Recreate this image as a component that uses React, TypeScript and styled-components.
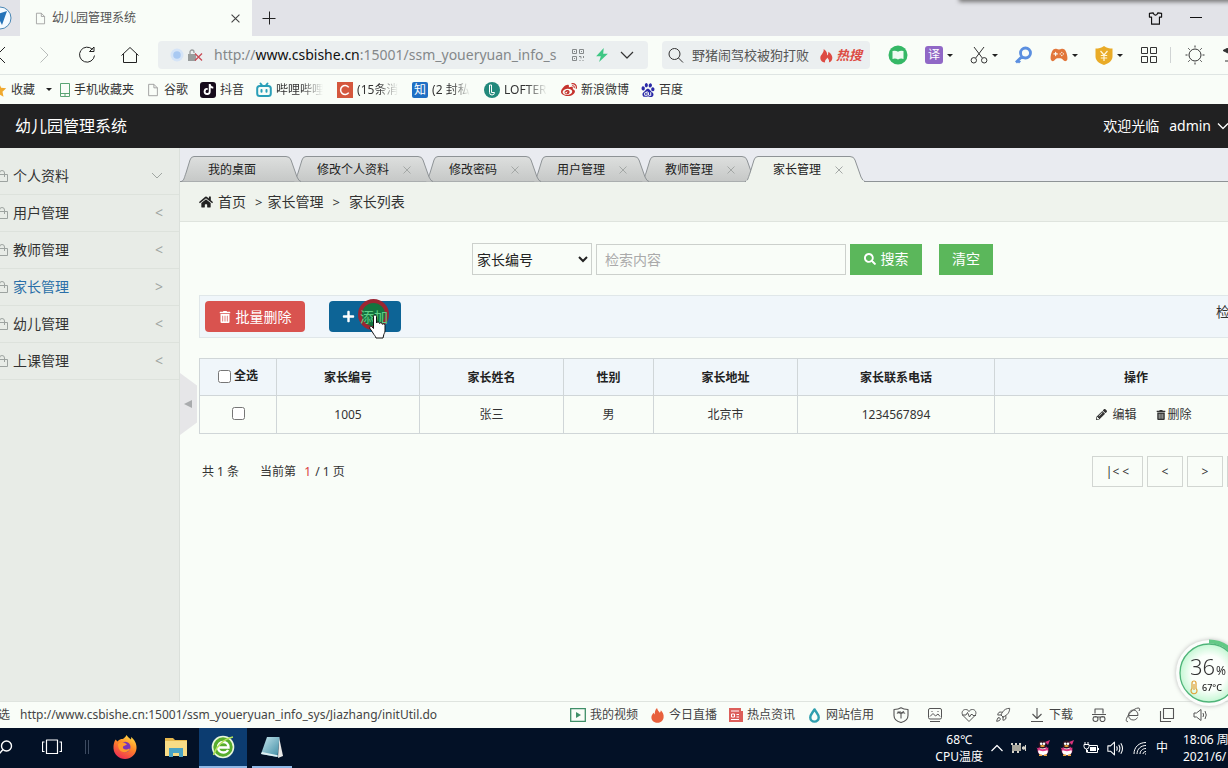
import React from 'react';
import styled, { createGlobalStyle, css } from 'styled-components';
import { FaHome, FaTrashAlt, FaSearch, FaPlus, FaPencilAlt, FaWeibo, FaTiktok } from 'react-icons/fa';
import { SiBaidu } from 'react-icons/si';
import { IoGameController } from 'react-icons/io5';
import { Rocket } from 'lucide-react';

const PAGE = '#f9fdf8';
const SANS = '"Noto Sans", "Noto Sans CJK SC", sans-serif';

const GlobalStyle = createGlobalStyle`
  * { box-sizing: border-box; }
  body { margin: 0; font-family: ${SANS}; font-size: 12px; line-height: 20px; color: #333; background: ${PAGE}; }
  button, input, select { font: inherit; color: inherit; }
  button { border: 0; padding: 0; background: none; cursor: pointer; }
  a { color: inherit; text-decoration: none; }
  ul { list-style: none; margin: 0; padding: 0; }
  svg { display: block; flex: none; }
`;

const Screen = styled.div`
  position: relative;
  display: flex;
  flex-direction: column;
  min-height: 100vh;
  overflow: hidden;
`;

/* ---------- browser chrome ---------- */

const TabStrip = styled.div`
  position: relative;
  display: flex;
  align-items: center;
  height: 36px;
  padding-right: 26px;
  background: #e2e3e8;
`;

const WindowShadow = styled.div`
  position: absolute;
  top: -5px;
  right: -4px;
  width: 272px;
  height: 5px;
  box-shadow: 0 1px 4px 1px #777;
`;

const Avatar = styled.svg`
  margin-left: -12px;
`;

const BrowserTab = styled.div`
  display: flex;
  align-items: center;
  gap: 5px;
  width: 232px;
  height: 36px;
  margin-left: 8px;
  padding: 0 12px 0 14px;
  background: ${PAGE};
  color: #555;
`;

const Grow = styled.span`
  flex: 1;
`;

const NewTab = styled.button`
  margin-left: 10px;
`;

const WindowButtons = styled.div`
  display: flex;
  gap: 27px;
  align-items: center;
`;

const Toolbar = styled.div`
  display: flex;
  align-items: center;
  height: 39px;
  border-bottom: 1px solid #dfe5e3;
`;

const NavButtons = styled.div`
  display: flex;
  align-items: center;
  gap: 25px;
  margin: 0 19px 0 -12px;
`;

const Forward = styled.button`
  margin-right: 4px;
`;

const Pill = styled.div`
  display: flex;
  align-items: center;
  height: 28px;
  border-radius: 4px;
  background: #ebeff0;
`;

const AddressBar = styled(Pill)`
  flex: 1;
  min-width: 0;
  padding: 0 14px 0 12px;
  gap: 11px;
`;

const Url = styled.div`
  flex: 1;
  min-width: 0;
  overflow: hidden;
  white-space: nowrap;
  font-size: 14px;
  color: #84888a;
  b { font-weight: 400; color: #111; }
`;

const SiteMarks = styled.div`
  display: flex;
  align-items: center;
  gap: 4px;
`;

const SearchPill = styled(Pill)`
  flex: none;
  width: 208px;
  margin: 0 18px 0 14px;
  padding: 0 8px 0 6px;
  gap: 8px;
`;

const HotInput = styled.input`
  flex: 1;
  min-width: 0;
  border: 0;
  padding: 0;
  background: none;
  font-size: 13px;
  outline: none;
  &::placeholder { color: #555; opacity: 1; }
`;

const Hot = styled.a`
  display: flex;
  align-items: center;
  gap: 2px;
  color: #dd4b43;
  font-size: 13px;
  font-weight: 700;
  font-style: italic;
`;

const Tools = styled.div`
  display: flex;
  flex: none;
  align-items: center;
  gap: 17px;
`;

const Tool = styled.button`
  display: flex;
  align-items: center;
  gap: 4px;
`;

const Caret = styled.span`
  border: 3px solid transparent;
  border-top-color: #222;
  border-bottom: 0;
`;

const ToolDivider = styled.span`
  width: 1px;
  height: 16px;
  margin: 0 -3px 0 -5px;
  background: #d0d4d4;
`;

const Badge = styled.span<{ $bg: string; $size: number; $round: number }>`
  display: flex;
  flex: none;
  align-items: center;
  justify-content: center;
  width: ${p => p.$size}px;
  height: ${p => p.$size}px;
  border-radius: ${p => p.$round}px;
  background: ${p => p.$bg};
  color: #fff;
`;

const Bookmarks = styled.nav`
  display: flex;
  align-items: center;
  gap: 12px;
  height: 29px;
  white-space: nowrap;
`;

const Bookmark = styled.a<{ $text?: number }>`
  display: flex;
  flex: none;
  align-items: center;
  gap: 4px;
  span.label {
    overflow: hidden;
    ${p => p.$text && css`
      width: ${p.$text}px;
      mask-image: linear-gradient(90deg, #000 50%, transparent 96%);
    `}
  }
`;

const Favorites = styled(Bookmark)`
  margin: 0 -4px 0 -9px;
  ${Caret} { margin-left: 7px; }
`;

/* ---------- application ---------- */

const AppHeader = styled.header`
  display: flex;
  align-items: center;
  justify-content: space-between;
  height: 44px;
  padding-left: 15px;
  background: #212122;
  color: #fff;
  font-size: 14px;
`;

const AppTitle = styled.h1`
  margin: 0;
  font-size: 16px;
  font-weight: 400;
`;

const Welcome = styled.div`
  display: flex;
  align-items: center;
  gap: 10px;
  margin-right: -2px;
`;

const UserMenu = styled.button`
  display: flex;
  align-items: center;
  gap: 5px;
`;

const AppBody = styled.div`
  position: relative;
  display: flex;
  flex: 1;
`;

const Sidebar = styled.aside`
  position: relative;
  flex: none;
  width: 180px;
  padding-top: 10px;
  background: #e8ece7;
  border-right: 1px solid #dbe0db;
`;

const MenuItem = styled.a<{ $active?: boolean }>`
  display: flex;
  align-items: center;
  gap: 5px;
  height: 37px;
  padding-right: 16px;
  margin-left: -4px;
  border-bottom: 1px solid #dde2dc;
  font-size: 14px;
  color: ${p => (p.$active ? '#2a6fa8' : '#333')};
`;

const Arrow = styled.span`
  color: #a0a6a2;
  font-size: 14px;
`;

const Collapse = styled.button`
  position: absolute;
  top: 225px;
  right: -18px;
  width: 17px;
  height: 62px;
  display: flex;
  align-items: center;
  padding-left: 4px;
  background: #e6e6e8;
  clip-path: polygon(0 0, 100% 20%, 100% 80%, 0 100%);
`;

const Content = styled.main`
  flex: 1;
  min-width: 0;
  margin-right: -50px;
`;

const PageTabs = styled.ul`
  display: flex;
  align-items: flex-end;
  height: 34px;
  padding-left: 1px;
  background: #e9ebf0;
  border-bottom: 1px solid #8e9396;
`;

const PageTab = styled.li<{ $order: number; $fixed?: boolean }>`
  position: relative;
  z-index: ${p => p.$order};
  display: flex;
  align-items: center;
  gap: 14px;
  height: 25px;
  padding: ${p => (p.$fixed ? '2px 37px 0 27px' : '2px 14px 0 24px')};
  color: #222;
  a, button { position: relative; display: block; }
`;

const TabShape = styled.svg`
  position: absolute;
  top: 0;
  left: 0;
  overflow: visible;
`;

const Breadcrumb = styled.nav`
  display: flex;
  align-items: center;
  height: 40px;
  padding-left: 19px;
  border-bottom: 1px solid #dfe4de;
  background: #eff3ed;
  font-size: 14px;
  svg { margin-right: 5px; }
`;

const Crumb = styled.span<{ $gap: number }>`
  display: flex;
  &::before { content: '>'; margin: 0 ${p => p.$gap}px 0 9px; font-size: 13px; }
`;

const Inner = styled.div`
  padding-left: 19px;
`;

const SearchRow = styled.form`
  display: flex;
  align-items: center;
  justify-content: center;
  gap: 4px;
  padding: 21px 12px 20px 0;
  font-size: 14px;
`;

const Field = styled.select`
  width: 120px;
  height: 32px;
  border: 1px solid #ccd0cc;
  background: ${PAGE};
  border-radius: 0;
  color: #222;
`;

const Query = styled.input`
  width: 250px;
  height: 31px;
  padding: 0 8px;
  border: 1px solid #ccd0cc;
  background: ${PAGE};
  &::placeholder { color: #aaa; opacity: 1; }
`;

const Button = styled.button<{ $bg: string; $width: number; $round?: boolean }>`
  position: relative;
  display: flex;
  align-items: center;
  justify-content: center;
  gap: 5px;
  width: ${p => p.$width}px;
  height: 31px;
  border-radius: ${p => (p.$round ? 4 : 0)}px;
  background: ${p => p.$bg};
  color: #fff;
  font-size: 14px;
`;

const ClearButton = styled(Button)`
  margin-left: 13px;
`;

const ActionBar = styled.div`
  display: flex;
  align-items: center;
  gap: 24px;
  height: 43px;
  padding: 0 33px 0 5px;
  border: 1px solid #e0e7e9;
  background: #f0f6fa;
  font-size: 14px;
`;

const Total = styled.span`
  padding-bottom: 9px;
`;

const AddLabel = styled.span`
  position: relative;
  color: #5fcf87;
`;

const ClickMark = styled.span`
  position: absolute;
  top: -2px;
  left: 29px;
  width: 31px;
  height: 31px;
  border: 4px solid #9c2632;
  border-radius: 50%;
  background: #14743f;
`;

const Pointer = styled.svg`
  position: absolute;
  top: 13px;
  left: 39px;
`;

const Grid = styled.table`
  width: 100%;
  margin-top: 20px;
  border-collapse: collapse;
  table-layout: fixed;
  text-align: center;
  th, td { height: 38px; padding: 0; border: 1px solid #d0d6d8; }
  th { height: 37px; padding-top: 1px; background: #f0f6fa; font-weight: 600; color: #222; }
  input { margin: 0; vertical-align: -1px; }
`;

const CheckLabel = styled.label`
  display: inline-flex;
  align-items: center;
  gap: 3px;
`;

const RowActions = styled.div`
  display: flex;
  justify-content: center;
  gap: 19px;
  padding-left: 16px;
  a { display: flex; align-items: center; gap: 2px; }
`;

const PagerRow = styled.div`
  display: flex;
  justify-content: space-between;
  align-items: center;
  margin-top: 22px;
`;

const Summary = styled.div`
  display: flex;
  gap: 21px;
  padding-left: 3px;
  word-spacing: normal;
  em { font-style: normal; color: #d9413d; margin: 0 1px 0 5px; }
`;

const Pager = styled.div`
  display: flex;
  gap: 4px;
`;

const PageButton = styled.button<{ $wide?: boolean }>`
  width: ${p => (p.$wide ? 51 : 36)}px;
  height: 31px;
  border: 1px solid #d2d6d2;
`;

const Gauge = styled.div`
  position: absolute;
  z-index: 1;
  right: -15px;
  bottom: -6px;
  svg { filter: drop-shadow(0 0 2px #bbb); }
`;

/* ---------- status bar and taskbar ---------- */

const StatusBar = styled.footer`
  display: flex;
  align-items: center;
  justify-content: space-between;
  height: 27px;
  border-top: 1px solid #dfe4df;
  background: ${PAGE};
  white-space: nowrap;
  color: #444;
`;

const LinkPreview = styled.div`
  display: flex;
  gap: 10px;
  margin-left: -2px;
`;

const StatusTools = styled.div`
  display: flex;
  align-items: center;
  gap: 18px;
  padding-right: 19px;
`;

const StatusLinks = styled.div`
  display: flex;
  gap: 12px;
  margin-right: 1px;
`;

const StatusLink = styled.button`
  display: flex;
  align-items: center;
  gap: 4px;
`;

const Taskbar = styled.div`
  display: flex;
  justify-content: space-between;
  height: 40px;
  background: #031126;
  color: #fff;
`;

const TaskApps = styled.div`
  display: flex;
  align-items: stretch;
`;

const TaskButton = styled.button<{ $width: number; $active?: boolean; $open?: boolean }>`
  display: flex;
  align-items: center;
  justify-content: center;
  width: ${p => p.$width}px;
  background: ${p => (p.$active ? '#0c3c70' : 'transparent')};
  border-bottom: 2px solid ${p => (p.$open ? '#8fb8e6' : 'transparent')};
`;

const NoteButton = styled(TaskButton)`
  margin-left: 5px;
`;

const Tray = styled.div`
  display: flex;
  align-items: center;
  gap: 8px;
`;

const TrayText = styled.div<{ $clock?: boolean }>`
  display: flex;
  flex-direction: column;
  line-height: 17px;
  align-items: ${p => (p.$clock ? 'flex-start' : 'center')};
  white-space: nowrap;
  ${p => p.$clock && 'width: 45px; margin-left: 7px;'}
`;

/* ---------- icons ---------- */

type IconProps = { d: string; size?: number; w?: number; color?: string; fill?: string; box?: number };

const Icon = ({ d, size = 16, w = 1, color = '#333', fill = 'none', box = 16 }: IconProps) => (
  <svg width={size} height={size} viewBox={`0 0 ${box} ${box}`} fill={fill} stroke={color} strokeWidth={w} strokeLinejoin="round">
    <path d={d} />
  </svg>
);

const DOC = 'M3 1.5h6l4 4v9H3zM9 1.5v4h4';
const FLAME = 'M7.500 0c.5 2.500 2 3.500 3 5 .8-.8 1-1.500 1-2.500C13.500 4.500 15 7 14.500 10c-.5 3.500-3.500 5.800-6.500 5.800S1.500 13.500 1.500 10C1.500 8 2.500 6.500 4 5c.2 1 .5 1.500 1 2C5 4.500 5.500 1.500 7.500 0z';

const Bag = () => <Icon size={12} box={12} color="#9da3a0" d="M.5 4.500h11v7H.5zM3.500 7V3Q3.500.5 6 .5T8.500 3V7" />;

const Penguin = () => (
  <svg width="16" height="16" viewBox="0 0 16 16">
    <ellipse cx="8" cy="10.500" rx="5.500" ry="4.800" fill="#c02a6c" />
    <ellipse cx="8" cy="11.500" rx="4.800" ry="3.800" fill="#fff" />
    <ellipse cx="7.500" cy="4.500" rx="4" ry="4" fill="#2a1422" />
    <circle cx="6.200" cy="3.800" r="1.300" fill="#fff" /><circle cx="9" cy="3.800" r="1.300" fill="#fff" />
    <ellipse cx="7.500" cy="6" rx="2.300" ry=".9" fill="#f0a43a" />
    <path d="M1.500 7.500c4 2.200 8 2.200 12 0l-.5 2.500c-3 1.500-7 1.500-10 0z" fill="#e03a86" />
    <path d="M10 2l5-2-2 5z" fill="#d8347c" />
    <path d="M4 15.200h3M9 15.200h3" stroke="#f0a43a" strokeWidth="1.400" />
  </svg>
);

const Firefox = () => (
  <svg width="24" height="24" viewBox="0 0 24 24">
    <defs>
      <linearGradient id="ff" x1=".8" y1="0" x2=".3" y2="1">
        <stop offset="0" stopColor="#ffe14a" /><stop offset=".45" stopColor="#ff8a26" /><stop offset="1" stopColor="#ee2b55" />
      </linearGradient>
    </defs>
    <path fill="url(#ff)" d="M2.500 4.500l2 2C6 4.500 8 4 9.500 4c1.500-.5 3-2 4-4 1 2 3 3 4.500 4.500.3-.8.200-1.500 0-2.500 3.500 2.500 6 7 5.500 11.500C23 19.500 18 24 12 24S1 19.500.500 13.500C.300 10 1 7 2.500 4.500z" />
    <circle cx="12.300" cy="12" r="5.200" fill="#7a35b8" />
    <path fill="#ff9a2c" d="M5 9c2-2 5-2 7-1l2 1.500-3 1.500c-2 .5-1 3.500 1.500 3.500 2 0 3-1 4.500-.7-1 3-5 4.200-8 3S5 12.500 5 9z" />
  </svg>
);

const Folder = () => (
  <svg width="24" height="22" viewBox="0 0 24 22">
    <path fill="#e6b84e" d="M1 2h8l2 2h12v4H1z" />
    <path fill="#f8dc86" d="M1 5h22v15H1z" />
    <path fill="#4aa3c4" d="M5 12h14v9h-4v-4H9v4H5z" />
  </svg>
);

const BrowserLogo = () => (
  <svg width="24" height="24" viewBox="0 0 24 24">
    <circle cx="12" cy="12" r="10.500" fill="#58ad2d" stroke="#e8f6dc" strokeWidth="1.600" />
    <path d="M7 12.500h10.500C17.500 9 15 7 12.200 7 9 7 7 9.500 7 12.300 7 15.500 9.500 17.500 12.300 17.500c2 0 3.800-.8 4.800-2.500" fill="none" stroke="#fff" strokeWidth="2.400" />
    <path d="M2.500 20C5 12 12 4 22 2" fill="none" stroke="#b4e35c" strokeWidth="1.500" />
  </svg>
);

const Notebook = () => (
  <svg width="24" height="22" viewBox="0 0 24 22">
    <defs>
      <linearGradient id="nb" x1="0" y1="0" x2="1" y2="1">
        <stop offset="0" stopColor="#c6e6ee" /><stop offset="1" stopColor="#3b8aa2" />
      </linearGradient>
    </defs>
    <path d="M19 1l4 19-5 2z" fill="#e8e8e6" />
    <path d="M7 1h12.500l-2 20L1 18z" fill="url(#nb)" />
    <path d="M1 18l16.500 3 .2-1.800L2 16z" fill="#dff0f4" />
  </svg>
);

const Television = () => (
  <svg width="16" height="16" viewBox="0 0 16 16" fill="none" stroke="#2a9fb8" strokeWidth="2" strokeLinecap="round">
    <rect x="1.200" y="4" width="13.600" height="10" rx="2.500" />
    <path d="M4.500 1.500L6.500 4M11.500 1.500L9.500 4M5.500 8v1.800M10.500 8v1.800" />
  </svg>
);

const Shield = () => (
  <svg width="18" height="19" viewBox="0 0 18 19">
    <path d="M9 0c2.500 2 5.500 2.500 8.500 2.500v8C17.500 14.500 14 17.500 9 19 4 17.500.5 14.500.5 10.500v-8C3.500 2.500 6.500 2 9 0z" fill="#e9ab27" />
    <path d="M5.500 5L9 9l3.500-4M9 9v6M5.800 9.500h6.400M5.800 12h6.400" fill="none" stroke="#fff6da" strokeWidth="1.200" />
  </svg>
);

/* Trapezoid outline of a page tab; the right foot overlaps the next tab. */
const TabOutline = ({ width, active }: { width: number; active?: boolean }) => {
  const left = active ? -4 : 0;
  const right = width + 8;
  const d = `M${left} 25.500C${left + 3} 25 ${left + 3} 22 ${left + 5} 17L${left + 9} 4Q${left + 10} .5 ${left + 13} .5H${right - 15}Q${right - 11} .5 ${right - 10} 4L${right - 4} 21Q${right - 2} 25.500 ${right} 25.500`;
  return (
    <TabShape width={width} height="25" aria-hidden="true">
      <defs>
        <linearGradient id="tabGrey" x1="0" y1="0" x2="0" y2="1">
          <stop offset="0" stopColor="#dddfde" /><stop offset="1" stopColor="#c6c8c7" />
        </linearGradient>
      </defs>
      <path d={d} fill={active ? '#eff3ed' : 'url(#tabGrey)'} stroke="#8e9396" />
      {active && <path d={`M${left + 1} 25.500H${right - 1}`} stroke="#eff3ed" strokeWidth="2" />}
    </TabShape>
  );
};

/* ---------- data ---------- */

const menu = ['个人资料', '用户管理', '教师管理', '家长管理', '幼儿管理', '上课管理'];

const pageTabs = [
  { name: '我的桌面', width: 112, fixed: true },
  { name: '修改个人资料', width: 132 },
  { name: '修改密码', width: 108 },
  { name: '用户管理', width: 108 },
  { name: '教师管理', width: 108 },
  { name: '家长管理', width: 108, active: true },
];

const columns = [
  { name: '家长编号', width: 143 },
  { name: '家长姓名', width: 144 },
  { name: '性别', width: 90 },
  { name: '家长地址', width: 144 },
  { name: '家长联系电话', width: 197 },
];

const rows = [['1005', '张三', '男', '北京市', '1234567894']];

const X = ({ size = 8, color = '#a4a8a6' }) => <Icon size={size} box={8} color={color} d="M.5.5l7 7M7.500.5l-7 7" />;

/* ---------- sections ---------- */

const BrowserChrome = () => (
  <>
    <TabStrip>
      <WindowShadow />
      <Avatar width="24" height="24" viewBox="0 0 24 24">
        <circle cx="12" cy="12" r="11" fill="#f4faff" stroke="#4a87b4" />
        <path d="M4 10l15-5-5 14-3-6z" fill="#2573b8" />
      </Avatar>
      <BrowserTab>
        <Icon size={13} color="#999" d={DOC} />
        <span>幼儿园管理系统</span>
        <Grow />
        <button aria-label="关闭标签"><X color="#444" size={9} /></button>
      </BrowserTab>
      <NewTab aria-label="新标签"><Icon size={14} box={14} color="#222" d="M7.500.5v13M.5 7.500h13" /></NewTab>
      <Grow />
      <WindowButtons>
        <button aria-label="皮肤"><Icon size={15} w={1.2} color="#111" d="M5.500 2L1.500 2.500V6.500h2.300v7.500h8.400V6.500h2.300v-4L10.500 2 9.500 3.800 8 4.500 6.500 3.800z" /></button>
        <button aria-label="最小化"><Icon size={12} box={12} color="#111" d="M0 5.500h12" /></button>
      </WindowButtons>
    </TabStrip>
    <Toolbar>
      <NavButtons>
        <button aria-label="后退"><Icon size={18} box={18} color="#222" d="M17 1L9 9l8 8" /></button>
        <Forward aria-label="前进"><Icon size={18} box={18} color="#b9bdbb" d="M9.500 1.500L17 9l-7.500 7.500" /></Forward>
        <button aria-label="刷新"><Icon size={18} box={18} color="#222" d="M14.500 3.500A7.500 7.500 0 1 0 16.500 9.500M16 1v4.500h-4.500z" /></button>
        <button aria-label="主页"><Icon size={18} box={18} color="#222" d="M.5 9.500L9 1.500l8.500 8M2.500 8v8.500h13V8" /></button>
      </NavButtons>
      <AddressBar>
        <SiteMarks>
          <svg width="14" height="14" viewBox="0 0 14 14">
            <circle cx="7" cy="7" r="6.500" fill="#d5e4f7" /><circle cx="7" cy="7" r="3.800" fill="#a9c9f2" />
          </svg>
          <svg width="15" height="13" viewBox="0 0 15 13" fill="none">
            <path d="M0 5h8v7H0z" fill="#989c9c" />
            <path d="M2 5V3a2 2 0 0 1 4 0v1" stroke="#989c9c" strokeWidth="1.300" />
            <path d="M7 4.500l7 7M14 4.500l-7 7" stroke="#c94b56" strokeWidth="1.300" />
          </svg>
        </SiteMarks>
        <Url>http://<b>www.csbishe.cn</b>:15001/ssm_youeryuan_info_s</Url>
        <Icon size={12} box={12} color="#85898a" d="M.5.500h4v4h-4zM7.500.500h4v4h-4zM.5 7.500h4v4h-4zM7 7.500h2v2M11.500 7v2M7.500 11.500h1M10.500 11.500h1M2 2.500h1M9 2.500h1M2 9.500h1" />
        <Icon size={14} box={12} color="none" fill="#3fc784" d="M7.500 0L1 7h4l-1.500 5L11 5H7z" />
        <Icon size={14} box={14} color="#333" w={1.200} d="M1 4l6 6 6-6" />
      </AddressBar>
      <SearchPill>
        <Icon size={16} d="M12 7A5.500 5.500 0 1 1 1 7a5.500 5.500 0 0 1 11 0zM10.500 11l4.500 4.500" />
        <HotInput aria-label="搜索" placeholder="野猪闹驾校被狗打败" />
        <Hot href="#"><Icon size={15} color="none" fill="#dd4b43" d="M5 1c3 2 4 4 3.500 7 1-.5 1.500-2 1.500-4 3 2 5 5 4 8-.5 2-2 3-3.500 3.500 1-3-1-4-1.500-5.500C8 12 6 12.500 6.500 15.500 3 15 1 12.500 1.500 9.500 2 7 5.500 5 5 1z" />热搜</Hot>
      </SearchPill>
      <Tools>
        <Tool aria-label="阅读">
          <svg width="20" height="20" viewBox="0 0 20 20">
            <circle cx="10" cy="10" r="9.500" fill="#35b866" />
            <path d="M4.500 6q3-1 5.500.8Q12.500 5 15.500 6v8q-3-1-5.500.6Q7.500 13 4.500 14z" fill="#eefcf2" />
          </svg>
        </Tool>
        <Tool><Badge $bg="#9068c6" $size={18} $round={3}>译</Badge><Caret /></Tool>
        <Tool aria-label="截图"><Icon size={18} box={18} d="M4 1l8.300 11M14 1L5.700 12M6.500 14.300a2.700 2.700 0 1 1-5.400 0 2.700 2.700 0 0 1 5.400 0zM16.900 14.300a2.700 2.700 0 1 1-5.400 0 2.700 2.700 0 0 1 5.400 0z" /><Caret /></Tool>
        <Tool aria-label="查找"><Icon size={18} box={18} w={2.800} color="#5b8fe0" d="M15.500 7a5 5 0 1 1-10 0 5 5 0 0 1 10 0zM7 10.500L1 16.500M3 14.500l2 2" /></Tool>
        <Tool aria-label="游戏"><IoGameController size={18} color="#e2763a" /><Caret /></Tool>
        <Tool aria-label="钱包"><Shield /><Caret /></Tool>
        <Tool aria-label="扩展"><Icon size={18} box={18} d="M1.500 1.500h6v6h-6zM10.500 1.500h6v6h-6zM1.500 10.500h6v6h-6zM10.500 10.500h6v6h-6z" /></Tool>
        <ToolDivider />
        <Tool aria-label="夜间模式"><Icon size={20} box={20} d="M16 10a6 6 0 1 1-12 0 6 6 0 0 1 12 0zM10 .5v2M10 17.500v2M.5 10h2M17.500 10h2M3.300 3.300l1.400 1.400M15.300 15.300l1.400 1.400M3.300 16.700l1.400-1.400M15.300 4.700l1.400-1.400" /></Tool>
        <svg width="6" height="14" viewBox="0 0 6 14"><path d="M6 0L1 2.500 6 5zM3 13h3" fill="#333" stroke="#333" /></svg>
      </Tools>
    </Toolbar>
    <Bookmarks>
      <Favorites href="#">
        <Icon size={16} color="none" fill="#f0a92e" d="M8 1l2.200 4.700 5 .6-3.700 3.500 1 5L8 12.300 3.500 14.800l1-5L.8 6.300l5-.6z" />
        <span className="label">收藏</span><Caret />
      </Favorites>
      <Bookmark href="#">
        <svg width="10" height="14" viewBox="0 0 10 14" fill="none" stroke="#5aa474"><path d="M.5.500h9v13h-9zM.5 10.500h9M4 12h2" /></svg>
        <span className="label">手机收藏夹</span>
      </Bookmark>
      <Bookmark href="#"><Icon size={14} color="#999" d={DOC} /><span className="label">谷歌</span></Bookmark>
      <Bookmark href="#"><Badge $bg="#160b1c" $size={16} $round={3}><FaTiktok size={11} /></Badge><span className="label">抖音</span></Bookmark>
      <Bookmark href="#" $text={49}><Television /><span className="label">哔哩哔哩</span></Bookmark>
      <Bookmark href="#" $text={43}><Badge $bg="#d4573d" $size={16} $round={0}><Icon size={12} color="#fff" w={2} d="M13 4.500A6 6 0 1 0 13 11.500" /></Badge><span className="label">(15条消</span></Bookmark>
      <Bookmark href="#" $text={40}><Badge $bg="#1f6fc4" $size={16} $round={2}>知</Badge><span className="label">(2 封私</span></Bookmark>
      <Bookmark href="#" $text={45}>
        <svg width="16" height="16" viewBox="0 0 16 16" fill="none"><circle cx="8" cy="8" r="8" fill="#23897c" /><path d="M5.500 3v7.500a2.500 2.500 0 0 0 5 0H7.500V3z" stroke="#fff" /></svg>
        <span className="label">LOFTER</span>
      </Bookmark>
      <Bookmark href="#"><FaWeibo size={16} color="#c5322d" /><span className="label">新浪微博</span></Bookmark>
      <Bookmark href="#"><SiBaidu size={14} color="#2b2aa8" /><span className="label">百度</span></Bookmark>
    </Bookmarks>
  </>
);

const ParentList = () => (
  <Content>
    <PageTabs>
      {pageTabs.map((t, i) => (
        <PageTab key={t.name} $order={t.active ? 9 : 8 - i} $fixed={t.fixed}>
          <TabOutline width={t.width} active={t.active} />
          <a href="#">{t.name}</a>
          {!t.fixed && <button aria-label={`关闭${t.name}`}><X /></button>}
        </PageTab>
      ))}
    </PageTabs>
    <Breadcrumb>
      <FaHome size={14} color="#222" />
      <a href="#">首页</a>
      <Crumb $gap={5}>家长管理</Crumb>
      <Crumb $gap={9}>家长列表</Crumb>
    </Breadcrumb>
    <Inner>
      <SearchRow onSubmit={e => e.preventDefault()}>
        <Field aria-label="检索字段"><option>家长编号</option></Field>
        <Query aria-label="检索内容" placeholder="检索内容" />
        <Button $bg="#5bb75b" $width={72}><FaSearch size={12} />搜索</Button>
        <ClearButton type="reset" $bg="#5bb75b" $width={54}>清空</ClearButton>
      </SearchRow>
      <ActionBar>
        <Button $bg="#d9534f" $width={100} $round><FaTrashAlt size={12} />批量删除</Button>
        <Button $bg="#0d6496" $width={72} $round>
          <ClickMark />
          <FaPlus size={13} />
          <AddLabel>添加</AddLabel>
          <Pointer width="19" height="25" viewBox="0 0 19 25">
            <path d="M5.500 2.500C5.500.500 8.500.500 8.500 2.500V9c.5-1.500 3-1.300 3 .5.500-1.200 2.800-1 2.800.8.800-1 2.700-.5 2.700 1V17c0 2-1.500 3-1.500 5l-.5 2h-7c-.5-2-2-3-3-5L2 14.500c-1-2 1-3 2.200-1.500l1.300 1.500z" fill="#fff" stroke="#111" />
          </Pointer>
        </Button>
        <Grow />
        <Total>检索</Total>
      </ActionBar>
      <Grid>
        <colgroup>
          <col width={77} />
          {columns.map(c => <col key={c.name} width={c.width} />)}
          <col />
        </colgroup>
        <thead>
          <tr>
            <th><CheckLabel><input type="checkbox" />全选</CheckLabel></th>
            {columns.map(c => <th key={c.name}>{c.name}</th>)}
            <th>操作</th>
          </tr>
        </thead>
        <tbody>
          {rows.map(r => (
            <tr key={r[0]}>
              <td><input type="checkbox" aria-label={`选择 ${r[0]}`} /></td>
              {r.map(v => <td key={v}>{v}</td>)}
              <td>
                <RowActions>
                  <a href="#"><FaPencilAlt size={11} />&nbsp;编辑</a>
                  <a href="#"><FaTrashAlt size={10} />删除</a>
                </RowActions>
              </td>
            </tr>
          ))}
        </tbody>
      </Grid>
      <PagerRow>
        <Summary><span>共 1 条</span><span>当前第 <em>1</em> / 1 页</span></Summary>
        <Pager>
          <PageButton $wide>|&lt; &lt;</PageButton>
          <PageButton>&lt;</PageButton>
          <PageButton>&gt;</PageButton>
          <PageButton $wide>&gt; &gt;|</PageButton>
        </Pager>
      </PagerRow>
    </Inner>
  </Content>
);

const CpuGauge = () => (
  <Gauge>
    <svg width="68" height="68" viewBox="0 0 68 68">
      <defs>
        <radialGradient id="glow"><stop offset=".6" stopColor="#fbfffb" /><stop offset="1" stopColor="#c5f7d4" /></radialGradient>
      </defs>
      <circle cx="34" cy="34" r="33" fill="#fbfdfb" />
      <path d="M34 2.500A31.500 31.500 0 0 1 64 24" fill="none" stroke="#62c985" strokeWidth="4" />
      <circle cx="34" cy="34" r="29" fill="url(#glow)" stroke="#4fb479" strokeWidth="1.300" />
      <text x="15" y="36" fontSize="22" fontWeight="300" fill="#333">36</text>
      <text x="41" y="36" fontSize="12" fill="#333">%</text>
      <path d="M17 49.500V44a2 2 0 0 1 4 0v5.500a3 3 0 1 1-4 0zM19 45v6" fill="none" stroke="#e0a035" strokeWidth="1.200" />
      <text x="27" y="52" fontSize="9" fontWeight="500" fill="#222">67°C</text>
    </svg>
  </Gauge>
);

const Status = () => (
  <StatusBar>
    <LinkPreview><span>选</span><span>http://www.csbishe.cn:15001/ssm_youeryuan_info_sys/Jiazhang/initUtil.do</span></LinkPreview>
    <StatusTools>
      <StatusLinks>
        <StatusLink>
          <svg width="16" height="14" viewBox="0 0 16 14"><path d="M.7.700h14.600v12.600H.7z" fill="none" stroke="#3f8f68" strokeWidth="1.300" /><path d="M6 4l5 3-5 3z" fill="#3f8f68" /></svg>
          我的视频
        </StatusLink>
        <StatusLink><Icon size={15} color="none" fill="#e8603c" d={FLAME} />今日直播</StatusLink>
        <StatusLink>
          <svg width="14" height="14" viewBox="0 0 14 14"><path d="M0 0h12v3h2v11H0z" fill="#dc5f5a" /><path d="M2 3h8M2.500 6h3v3h-3zM7.500 6.500H10M7.500 9H10M2 11.500h8" fill="none" stroke="#fff" /></svg>
          热点资讯
        </StatusLink>
        <StatusLink><Icon size={15} color="#2f9fae" w={2.600} d="M8 1.500C10 5 12.500 7 12.500 10a4.500 4.500 0 0 1-9 0C3.500 7 6 5 8 1.500z" />网站信用</StatusLink>
      </StatusLinks>
      <Icon color="#555" w={1.100} d="M8 .8c2 1.400 4.500 1.700 7 1.700v6C15 12 12 14.500 8 15.500 4 14.500 1 12 1 8.500v-6c2.500 0 5-.3 7-1.700zM4 6.500Q5 5 8 6.500 11 5 12 6.500M8 6.500V11.500M4.500 5H8M8 6l3-1.500" />
      <Icon color="#555" d="M3 1.500h10q1.500 0 1.500 1.500v7.500q0 1.500-1.500 1.500H3Q1.500 12 1.500 10.500V3Q1.500 1.500 3 1.500zM3 14.500h10M3 9.500l3-3 2.500 2.500L11 7l2 2.500M10.500 4.500h1M4.500 4.500h1" />
      <Icon color="#555" d="M8 14.500L2 8.500C0 6 1.500 2.500 4.500 2.500 6.500 2.500 7.500 3.500 8 4.500 8.500 3.500 9.500 2.500 11.500 2.500c3 0 4.500 3.500 2.500 6zM1 8h4l1.500-2.500L8.500 10 10 7.500h1.500l.5 1h3" />
      <Rocket size={16} strokeWidth={1.500} color="#555" />
      <StatusLink><Icon color="#555" w={1.100} d="M8 1v10M3.500 7L8 11.500 12.500 7M2 14.500h12" />下载</StatusLink>
      <Icon color="#555" w={1.100} d="M4 6.500V2h8v4.500M1 7.500h14M7 12a2.500 2.500 0 1 1-5 0 2.500 2.500 0 0 1 5 0zM14 12a2.500 2.500 0 1 1-5 0 2.500 2.500 0 0 1 5 0zM2 10h12" />
      <Icon color="#555" d="M4 8.500h9C13 5 11 3 8.300 3 5.500 3 3.500 5.500 3.500 8.200S5.500 13 8.200 13c2 0 3.500-1 4.300-2.500M3 14.500C1 15 .500 13 2.500 9.500S9 1.500 13 1c2-.2 2 1.500 1 3" />
      <Icon color="#555" w={1.100} d="M4.500 1.500h10v10h-10zM1.500 4v10.500H12" />
      <Icon color="#555" d="M1 6h2.500L8 2.500v11L3.500 10H1zM10 6q1.200 2 0 4M12 4q2.500 4 0 8" />
    </StatusTools>
  </StatusBar>
);

const DesktopBar = () => (
  <Taskbar>
    <TaskApps>
      <TaskButton $width={28} aria-label="搜索"><svg width="28" height="18" viewBox="0 0 28 18" fill="none" stroke="#fff" strokeWidth="1.400"><circle cx="6.500" cy="8" r="5" /><path d="M3 11.500L-1 16" /></svg></TaskButton>
      <TaskButton $width={48} aria-label="任务视图"><Icon size={20} box={20} color="#fff" w={1.200} d="M4.500 3h11v13.500h-11zM2.500 5H.500v9.500h2M17.500 5h2v9.500h-2" /></TaskButton>
      <TaskButton $width={21} as="span"><Icon size={14} box={14} color="#3c4a60" d="M5.500 0v14M8.500 0v14" /></TaskButton>
      <TaskButton $width={55} aria-label="Firefox"><Firefox /></TaskButton>
      <TaskButton $width={47} aria-label="文件资源管理器"><Folder /></TaskButton>
      <TaskButton $width={48} $active $open aria-label="浏览器"><BrowserLogo /></TaskButton>
      <NoteButton $width={40} $open aria-label="记事本"><Notebook /></NoteButton>
    </TaskApps>
    <Tray>
      <TrayText><span>68℃</span><span>CPU温度</span></TrayText>
      <Icon size={12} box={12} color="#fff" w={1.200} d="M.5 9L6 3.500 11.500 9" />
      <svg width="16" height="12" viewBox="0 0 16 12"><path d="M1 3h9v6H1z" fill="#a9a79c" /><path d="M0 1h2v2H0zM4 1h2v2H4zM8 1h2v2H8zM1 9h2v2H1zM6 9h2v2H6zM11 5l2-1 1 1V3h1v6h-1V7l-1 1-2-1z" fill="#d5d3ca" /></svg>
      <Penguin />
      <Penguin />
      <svg width="16" height="14" viewBox="0 0 16 14" fill="none" stroke="#fff"><path d="M6 4.500h8.500v7H4.500V9M15.500 7v2M1 3.500h5v2a2 2 0 0 1-5 0zM2 3.500V1M5 3.500V1M3.500 8v3.500" /><path d="M7 6h6v4H7z" fill="#fff" stroke="none" /></svg>
      <Icon size={17} color="#fff" d="M.8 5.500h2.500L7 2v12l-3.700-3.500H.8zM9 6q1.200 2 0 4M11 4.500q2.200 3.500 0 7M13 3q3.200 5 0 10" />
      <Icon color="#fff" d="M2 14C2 7 7 2.500 14 2.500M5 14c0-5 4-8.500 9-8.500M8 14c0-3 2.500-5.500 6-5.500M11 14c0-1.500 1.500-2.500 3-2.500M13 14h1" />
      <span>中</span>
      <TrayText $clock><span>18:06 周</span><span>2021/6/</span></TrayText>
    </Tray>
  </Taskbar>
);

export default function App() {
  return (
    <Screen>
      <GlobalStyle />
      <BrowserChrome />
      <AppHeader>
        <AppTitle>幼儿园管理系统</AppTitle>
        <Welcome>
          <span>欢迎光临</span>
          <UserMenu>admin<Icon size={14} box={14} color="#fff" w={1.300} d="M2 4.500l5 5 5-5" /></UserMenu>
        </Welcome>
      </AppHeader>
      <AppBody>
        <Sidebar>
          {menu.map((m, i) => (
            <MenuItem key={m} href="#" $active={i === 3}>
              <Bag />
              <span>{m}</span>
              <Grow />
              {i === 0 ? <Icon size={12} box={12} color="#a0a6a2" d="M1 3l5 5 5-5" /> : <Arrow>{i === 3 ? '>' : '<'}</Arrow>}
            </MenuItem>
          ))}
          <Collapse aria-label="收起菜单"><Icon size={8} box={8} color="none" fill="#a9abad" d="M8 0v8L0 4z" /></Collapse>
        </Sidebar>
        <ParentList />
        <CpuGauge />
      </AppBody>
      <Status />
      <DesktopBar />
    </Screen>
  );
}
